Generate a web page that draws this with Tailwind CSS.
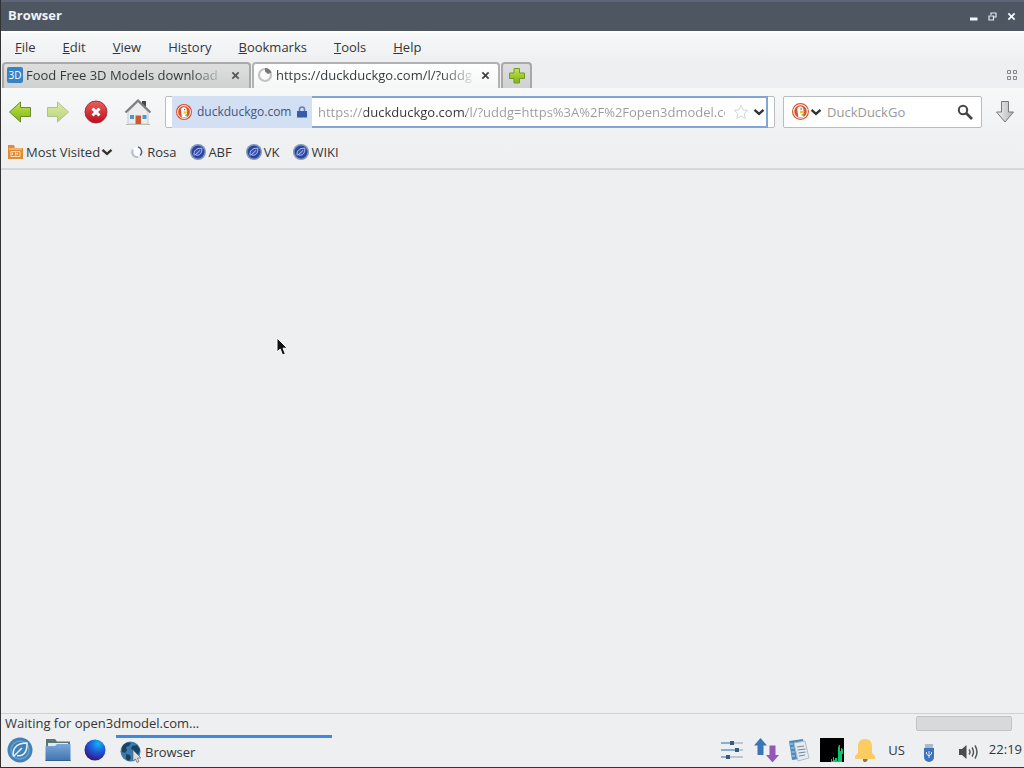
<!DOCTYPE html>
<html lang="en">
<head>
  <meta charset="UTF-8">
  <title>Browser</title>
  <script src="https://cdn.jsdelivr.net/npm/@tailwindcss/browser@4"></script>
</head>
<body class="min-h-screen flex flex-col bg-[#eeeff0] border-l border-b border-[#333] font-['Open_Sans',sans-serif] text-[13px] leading-5 text-[#333638] overflow-hidden">

  <!-- shared shapes -->
  <svg class="absolute w-0 h-0">
    <defs>
      <linearGradient id="green" x1="0" y1="0" x2="0" y2="1"><stop offset="0" stop-color="#c4e24a"/><stop offset="1" stop-color="#7eb512"/></linearGradient>
      <linearGradient id="red" x1="0" y1="0" x2="0" y2="1"><stop offset="0" stop-color="#e8605c"/><stop offset="1" stop-color="#b80f1c"/></linearGradient>
      <linearGradient id="grey" x1="0" y1="0" x2="1" y2="0"><stop offset="0" stop-color="#f2f2f2"/><stop offset="1" stop-color="#b5b5b5"/></linearGradient>
      <linearGradient id="blue" x1="0" y1="0" x2="0" y2="1"><stop offset="0" stop-color="#79a9da"/><stop offset="1" stop-color="#3f73ad"/></linearGradient>
      <radialGradient id="orb" cx="0.65" cy="0.2" r="0.85"><stop offset="0" stop-color="#12b4ee"/><stop offset="0.45" stop-color="#1d5fdc"/><stop offset="1" stop-color="#36107f"/></radialGradient>
      <symbol id="duck" viewBox="0 0 16 16">
        <circle cx="8" cy="8" r="8" fill="#d9532c"/>
        <circle cx="8" cy="8" r="6.4" fill="none" stroke="#fff" stroke-width="1"/>
        <path d="M6 13.5 5 6.5C4.8 4 6.5 3 8.300 3.300 10.500 3.700 11 5.500 10.800 7L11 13.300Z" fill="#fff"/>
        <path d="M7.500 7.300l4.300.2-1.500 1.800-2.800.4z" fill="#f7c325"/>
        <path d="M8.500 11l2.800-1v2.800z" fill="#67bd47"/>
        <circle cx="8.600" cy="5.600" r=".7" fill="#444"/>
      </symbol>
      <symbol id="rosa" viewBox="0 0 16 16">
        <circle cx="8" cy="8" r="8" fill="#8298bd"/>
        <circle cx="8" cy="8" r="6.500" fill="#2c469f"/>
        <path d="M4.200 11.500C3.300 7 6 4 11.800 4.200 12.200 9 9.800 12 5.800 11M4.800 11.200 10 6.500" fill="#3a55b4" stroke="#b3c1ec" stroke-width="1"/>
      </symbol>
      <symbol id="chevron" viewBox="0 0 12 8"><path d="M1.500 1.800 6 5.800l4.500-4" fill="none" stroke="#333" stroke-width="2.400"/></symbol>
      <symbol id="cross" viewBox="0 0 10 10"><path d="M1.500 1.500l7 7M8.500 1.500l-7 7" stroke="currentColor" stroke-width="2"/></symbol>
    </defs>
  </svg>

  <header class="h-[31px] shrink-0 flex items-center justify-between border-t-2 border-t-[#5f6578] bg-[#4e5761] pl-[7px] pr-2 pb-[3px] text-[#f0f3f5]">
    <h1 class="font-bold">Browser</h1>
    <div class="flex items-center gap-2.5 pt-0.5">
      <button aria-label="Minimize"><svg class="w-[9px] h-[9px]" viewBox="0 0 9 9"><path d="M1 7h7.500" stroke="#f0f8fc" stroke-width="3"/></svg></button>
      <button aria-label="Restore"><svg class="w-[9px] h-[9px]" viewBox="0 0 9 9"><path d="M3 3V1h5v4H6M1 4h4.500v4H1z" fill="none" stroke="#e3eaf0" stroke-width="1.200"/></svg></button>
      <button aria-label="Close"><svg class="w-[9px] h-[9px] text-[#f0f8fc]"><use href="#cross"/></svg></button>
    </div>
  </header>

  <nav class="h-[31px] shrink-0 flex items-center gap-[27px] border-t-2 border-white bg-linear-to-b from-[#f7f8f8] to-[#eeeff1] pl-3.5 pb-0.5">
    <button><u>F</u>ile</button>
    <button><u>E</u>dit</button>
    <button><u>V</u>iew</button>
    <button>Hi<u>s</u>tory</button>
    <button><u>B</u>ookmarks</button>
    <button><u>T</u>ools</button>
    <button><u>H</u>elp</button>
  </nav>

  <!-- tabs -->
  <div class="h-[26px] shrink-0 flex items-stretch pl-px">
    <div class="w-[249px] flex items-center rounded-t border-2 border-b-0 border-[#a9a9a9] bg-linear-to-b from-[#dedede] to-[#cfd1d2] pl-[3px] pr-[9px] pb-0.5">
      <span class="w-4 h-4 shrink-0 grid place-items-center rounded-xs bg-[#3584c8] text-white text-[10px] leading-4">3D</span>
      <button class="ml-[3px] whitespace-nowrap text-left bg-clip-text text-transparent bg-[linear-gradient(90deg,#333638_165px,#33363840_190px)]">Food Free 3D Models download</button>
      <button aria-label="Close tab" class="ml-auto"><svg class="w-[9px] h-[9px] text-[#555]"><use href="#cross"/></svg></button>
    </div>
    <div class="w-[248px] ml-px flex items-center rounded-t border-2 border-b-0 border-[#b2b2b2] bg-linear-to-b from-white to-[#f5f6f7] pl-[3px] pr-2 pb-0.5">
      <svg class="w-4 h-4 shrink-0" viewBox="0 0 16 16"><circle cx="8" cy="8" r="6" fill="none" stroke="#c3c3c3" stroke-width="2.200"/><path d="M8 1a7 7 0 0 1 6.500 4.500L11 7 8 4.500z" fill="#777"/></svg>
      <button class="ml-[3px] whitespace-nowrap text-left bg-clip-text text-transparent bg-[linear-gradient(90deg,#333638_165px,#33363820_196px)]">https://duckduckgo.com/l/?uddg</button>
      <button aria-label="Close tab" class="ml-auto"><svg class="w-[9px] h-[9px] text-[#444]"><use href="#cross"/></svg></button>
    </div>
    <button aria-label="New tab" class="w-[31px] ml-px grid place-items-center rounded-t border-2 border-b-0 border-[#a9a9a9] bg-linear-to-b from-[#dedede] to-[#cfd1d2]">
      <svg class="w-[18px] h-[18px]" viewBox="0 0 18 18"><path d="M6 1.500h5.500V6H16.500v5.500h-5v4.500H6v-4.500H1.500V6H6z" fill="url(#green)" stroke="#75982a"/></svg>
    </button>
    <button aria-label="Tab groups" class="ml-auto mr-[6px]">
      <svg class="w-3 h-3" viewBox="0 0 12 12"><path d="M1.500 1.500h3v3h-3zM7.500 1.500h3v3h-3zM1.500 7.500h3v3h-3zM7.500 7.500h3v3h-3z" fill="none" stroke="#858585"/></svg>
    </button>
  </div>

  <!-- navigation toolbar -->
  <div class="h-[47px] shrink-0 flex items-center bg-linear-to-b from-[#f7f8f8] to-[#f0f1f3] pl-[7px] pr-[9px]">
    <button aria-label="Back"><svg class="w-6 h-6" viewBox="0 0 24 24"><path d="M1.500 12 12.500 2v5.500H22.500v9H12.500V22z" fill="url(#green)" stroke="#6b8c2f"/></svg></button>
    <button aria-label="Forward" class="ml-3.5 opacity-50"><svg class="w-6 h-6" viewBox="0 0 24 24"><path d="M22.500 12 11.500 2v5.500H1.500v9H11.500V22z" fill="url(#green)" stroke="#6b8c2f"/></svg></button>
    <button aria-label="Stop" class="ml-3.5"><svg class="w-6 h-6" viewBox="0 0 24 24"><circle cx="12" cy="12" r="11" fill="url(#red)" stroke="#a8323a"/><path d="M8.500 8.500l7 7M15.500 8.500l-7 7" stroke="#fff" stroke-width="3"/></svg></button>
    <button aria-label="Home" class="ml-4">
      <svg class="w-7 h-7" viewBox="0 0 28 28">
        <path d="M4 14 14 4l10 10v12H4z" fill="#eceeee" stroke="#c5c9ca"/>
        <path d="M18 3h4v8l-4-4z" fill="#454545"/>
        <path d="M1.500 14.500 14 2.500l12.500 12" fill="none" stroke="#7c8082" stroke-width="2.200"/>
        <path d="M6 17h4v4H6zM18.500 17h4v4h-4z" fill="#5094d2"/>
        <path d="M11.500 17.500h5.500V26h-5.500z" fill="#cb5a30"/>
        <path d="M2 26.500h24" stroke="#b9bdb5"/>
      </svg>
    </button>

    <div class="h-8 flex-1 min-w-0 ml-[13px] flex items-stretch rounded-xs border border-[#b9bcc0] bg-white pl-[6px] pr-[6px]">
      <button class="w-[140px] shrink-0 -my-px flex items-center gap-[5px] bg-[#d3dff2] pl-1 pr-1 whitespace-nowrap text-xs text-[#405684]">
        <svg class="w-4 h-4 shrink-0"><use href="#duck"/></svg>
        <span>duckduckgo.com</span>
        <svg class="w-3 h-3 ml-auto shrink-0" viewBox="0 0 12 12"><path d="M3.500 6V3.500a2.500 2.500 0 0 1 5 0V6" fill="none" stroke="#6781b6" stroke-width="1.600"/><path d="M1 5h10v6.500H1z" fill="#3a5ba8"/></svg>
      </button>
      <div class="flex-1 min-w-0 -my-px flex items-center border-y-2 border-r-2 border-[#84a4d8] pl-[6px]">
        <input type="text" aria-label="Address" value="https://duckduckgo.com/l/?uddg=https%3A%2F%2Fopen3dmodel.com%2F" class="flex-1 min-w-0 outline-none bg-clip-text text-transparent bg-[linear-gradient(90deg,#999_46px,#333_46px,#333_148px,#999_148px)]">
        <button aria-label="Bookmark this page" class="ml-2"><svg class="w-4 h-4" viewBox="0 0 16 16"><path d="M8 1.500l2 4.400 4.600.5-3.400 3.200 1 4.700L8 12l-4.200 2.300 1-4.700L1.400 6.400 6 5.900z" fill="#fff" stroke="#d3d5d8"/></svg></button>
        <button aria-label="Show history" class="ml-1 mr-px"><svg class="w-3 h-2"><use href="#chevron"/></svg></button>
      </div>
    </div>

    <div class="w-[199px] h-8 ml-2 flex items-center rounded-xs border border-[#b9bcc0] bg-white pl-2 pr-2">
      <button aria-label="Choose search engine" class="flex items-center gap-px">
        <svg class="w-[17px] h-[17px]"><use href="#duck"/></svg>
        <svg class="w-3 h-2"><use href="#chevron"/></svg>
      </button>
      <input type="text" aria-label="Search" placeholder="DuckDuckGo" class="flex-1 min-w-0 ml-[5px] outline-none placeholder:text-[#999]">
      <button aria-label="Search"><svg class="w-4 h-4" viewBox="0 0 16 16"><circle cx="6" cy="6" r="4.200" fill="none" stroke="#444" stroke-width="2"/><path d="M9 9l6 6" stroke="#444" stroke-width="2.600"/></svg></button>
    </div>
    <button aria-label="Downloads" class="ml-[13px]"><svg class="w-5 h-6" viewBox="0 0 20 24"><path d="M6.500 1.500h7V12h5L10 22 1.500 12h5z" fill="url(#grey)" stroke="#777"/></svg></button>
  </div>

  <!-- bookmarks -->
  <nav class="h-[35px] shrink-0 flex items-center border-b-2 border-[#d5d8da] bg-linear-to-b from-[#f0f1f3] to-[#eeeff1] pl-[7px]">
    <button class="flex items-center gap-[3px]">
      <svg class="w-[15px] h-4" viewBox="0 0 15 16"><path d="M0 1h6l1 3h8v11H0z" fill="#e28b36"/><path d="M1 5h13M3 7.500h9v5H3z" fill="none" stroke="#fbdcae"/><path d="M4.500 11V8.500M7.500 11.500v-3l2 2.500V8.500" fill="none" stroke="#fbdcae"/></svg>
      <span>Most Visited</span><svg class="w-3 h-2 -ml-0.5"><use href="#chevron"/></svg>
    </button>
    <a href="#" class="ml-4 flex items-center gap-[3px]">
      <svg class="w-[15px] h-4" viewBox="0 0 15 16"><circle cx="8" cy="8" r="5" fill="#fff"/><path d="M9 3a5 5 0 0 1 2 8.500" fill="none" stroke="#53617d" stroke-width="1.500"/><path d="M9.500 13A5 5 0 0 1 4 5.500" fill="none" stroke="#b4bccb" stroke-width="1.800"/></svg>
      Rosa
    </a>
    <a href="#" class="ml-3.5 flex items-center gap-0.5"><svg class="w-4 h-4"><use href="#rosa"/></svg>ABF</a>
    <a href="#" class="ml-3.5 flex items-center gap-0.5"><svg class="w-4 h-4"><use href="#rosa"/></svg>VK</a>
    <a href="#" class="ml-3.5 flex items-center gap-0.5"><svg class="w-4 h-4"><use href="#rosa"/></svg>WIKI</a>
  </nav>

  <main class="flex-1 relative">
    <!-- mouse pointer -->
    <svg class="absolute left-[275px] top-[167px] w-3 h-5" viewBox="0 0 12 20"><path d="M1 1v14l3.200-3L6.500 18l2.800-1.200L7 11.200h4.300z" fill="#111" stroke="#fff"/></svg>
  </main>

  <div class="h-5 shrink-0 flex items-center justify-between border-t border-[#cfd1d3] pl-1 pr-3">
    <span class="pb-0.5">Waiting for open3dmodel.com...</span>
    <div class="w-24 h-[15px] rounded-xs border border-[#c3c4c6] bg-[#d8d9da]"></div>
  </div>

  <!-- taskbar -->
  <footer class="h-[34px] shrink-0 flex items-center pl-[6px]">
    <button aria-label="Start menu"><svg class="w-[26px] h-[26px]" viewBox="0 0 26 26"><circle cx="13" cy="13" r="12.500" fill="#4380b5"/><circle cx="13" cy="13" r="9" fill="none" stroke="#6a9dca" stroke-width="1.500"/><path d="M6.500 19.500C5 12 9 6 20 6c.5 9-4 14-10 12.500M6.500 19.500 15 11" fill="none" stroke="#e6f2fa" stroke-width="1.500"/></svg></button>
    <button aria-label="Files" class="ml-3"><svg class="w-[26px] h-6" viewBox="0 0 26 24"><path d="M1 1h9l2 2.500h13V10H1z" fill="#5d7674"/><path d="M3 5h20v5H3z" fill="#e5eaec"/><path d="M0.500 8H10l2-2h13.500v17H.5z" fill="url(#blue)"/><path d="M.5 22.500h25" stroke="#35638f"/></svg></button>
    <button aria-label="Web" class="ml-[13px]"><svg class="w-[22px] h-[22px]" viewBox="0 0 22 22"><circle cx="11" cy="11" r="10.500" fill="url(#orb)"/></svg></button>
    <div class="w-[216px] ml-2.5 h-full pt-0.5">
      <button class="w-full h-full flex items-center gap-[3px] border-t-3 border-[#3f8ae0] pl-1 pb-px">
        <svg class="w-[22px] h-[22px]" viewBox="0 0 22 22"><circle cx="10.500" cy="10.500" r="10" fill="#3a7cae"/><path d="M2 6c3-5 7-5 9-4l-2 3-3 1 1 3-2 3-3-1zM12 5l5-1 3 5-2 5-3-1-1-4-3-1zM6 13l4 1 1 3-2 3-3-2z" fill="#1b4260"/><path d="M13 9v11l2.500-2 1.500 3.500 2-1-1.500-3.500H21z" fill="#ddd" stroke="#666" stroke-width=".7"/></svg>
        <span>Browser</span>
      </button>
    </div>

    <div class="ml-auto flex items-center pr-0.5">
      <svg class="w-[22px] h-[22px]" viewBox="0 0 22 22"><path d="M0 4h22M0 11h22M0 18h22" stroke="#bac8d5" stroke-width="2"/><path d="M0 4h9M0 11h15M0 18h6" stroke="#82aed9" stroke-width="2"/><path d="M9 4h4M14 11h4M5 18h4" stroke="#3d5979" stroke-width="4"/></svg>
      <svg class="w-[26px] h-6 ml-2.5" viewBox="0 0 26 24"><path d="M7.500 0 14 7.500h-3.500V17h-6V7.500H1z" fill="#3d75b7"/><path d="M19.500 24.500 13 17h3.500V7.500h6V17H26z" fill="#9457bb"/></svg>
      <svg class="w-[22px] h-6 ml-[9px]" viewBox="0 0 22 24"><path d="M1 3 15 1l3 19-14 2z" fill="#4d8bbd"/><path d="M6 5l11-2 4 17-11 3z" fill="#e5eaf0" stroke="#b2bdc9"/><path d="M9 9l7-1M9.500 12l8-1M10.500 15l7-1M11 18l6-1" stroke="#74879a"/><path d="M2 6h3M3 10h3M3.500 14h3M4 18h3" stroke="#bed6e8"/></svg>
      <svg class="w-6 h-6 ml-2.5" viewBox="0 0 24 24"><path d="M0 0h24v24H0z"/><path d="M11 24v-3h1v2h1v-4h1v3h1v-2h2v3h1V10l1-3h1v6h1v-3h1l1 2v4h-1v8z" fill="#0ac769"/></svg>
      <svg class="w-[22px] h-6 ml-2.5" viewBox="0 0 22 24"><path d="M9 20h4a2 2 0 0 1-4 3z" fill="#87765a"/><path d="M11 1C6 1 4 4 4 9v6l-3 3v3h20v-3l-3-3V9c0-5-2-8-7-8z" fill="#fccb62"/></svg>
      <button class="ml-3">US</button>
      <svg class="w-3 h-[18px] ml-[18px] mt-[6px]" viewBox="0 0 12 18"><path d="M2 0h8v5H2z" fill="#aebac7"/><path d="M1 4h10v9a5 5 0 0 1-10 0z" fill="#3d73bd"/><path d="M6 14V7M3.500 8v2L6 12l2.500-2V8" fill="none" stroke="#d7e5f8"/></svg>
      <svg class="w-5 h-4 ml-[23px] mt-1" viewBox="0 0 20 16"><path d="M1 5h3l4.500-4v14L4 11H1z" fill="#484c4f"/><path d="M11 5.500q2 2.500 0 5M14 3.500q3 4.500 0 9M17 1.500q4 6.500 0 13" fill="none" stroke="#55595c" stroke-width="1.500"/></svg>
      <time class="ml-[11px] pb-0.5">22:19</time>
    </div>
  </footer>

</body>
</html>
